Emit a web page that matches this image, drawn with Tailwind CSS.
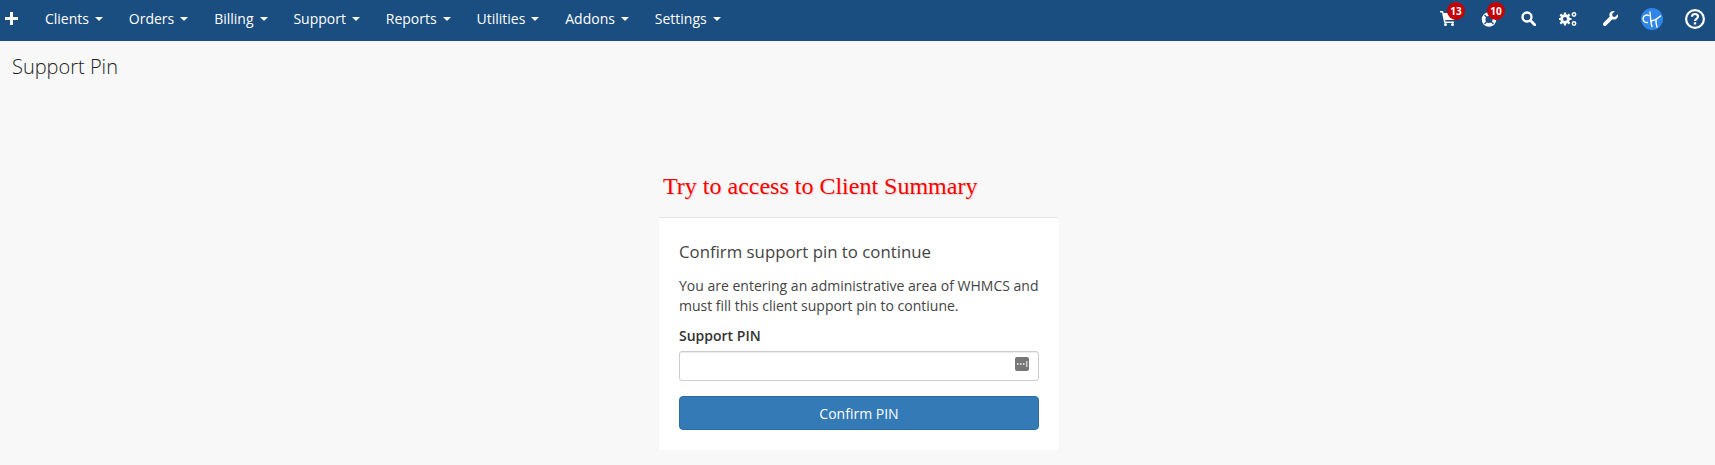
<!DOCTYPE html>
<html lang="en">
<head>
  <meta charset="UTF-8">
  <title>Support Pin</title>
  <script src="https://cdn.jsdelivr.net/npm/@tailwindcss/browser@4"></script>
</head>
<body class="bg-[#f8f8f8] min-h-screen font-['Open_Sans',sans-serif] text-[#333]">
  <nav class="h-[41px] bg-[#1a4d80] flex items-start text-white text-[14px]">
    <a href="#" class="w-[32px] h-[37px] pl-[5px] flex items-center shrink-0">
      <svg width="13" height="13" viewBox="0 0 13 13" fill="#fff"><path d="M5 0h3v5h5v3H8v5H5V8H0V5h5z"/></svg>
    </a>
    <ul class="flex h-[37px] items-center">
      <li class="px-[12.95px] flex items-center">Clients<span class="ml-[6px] border-x-[4px] border-t-[4px] border-x-transparent border-t-white"></span></li>
      <li class="px-[12.95px] flex items-center">Orders<span class="ml-[6px] border-x-[4px] border-t-[4px] border-x-transparent border-t-white"></span></li>
      <li class="px-[12.95px] flex items-center">Billing<span class="ml-[6px] border-x-[4px] border-t-[4px] border-x-transparent border-t-white"></span></li>
      <li class="px-[12.95px] flex items-center">Support<span class="ml-[6px] border-x-[4px] border-t-[4px] border-x-transparent border-t-white"></span></li>
      <li class="px-[12.95px] flex items-center">Reports<span class="ml-[6px] border-x-[4px] border-t-[4px] border-x-transparent border-t-white"></span></li>
      <li class="px-[12.95px] flex items-center">Utilities<span class="ml-[6px] border-x-[4px] border-t-[4px] border-x-transparent border-t-white"></span></li>
      <li class="px-[12.95px] flex items-center">Addons<span class="ml-[6px] border-x-[4px] border-t-[4px] border-x-transparent border-t-white"></span></li>
      <li class="px-[12.95px] flex items-center">Settings<span class="ml-[6px] border-x-[4px] border-t-[4px] border-x-transparent border-t-white"></span></li>
    </ul>
    <div class="ml-auto flex h-[37px] items-center">
      <!-- cart -->
      <a href="#" class="relative w-[30px] flex justify-center">
        <svg width="16" height="15" viewBox="0 0 16 15" fill="#fff"><path d="M0 0h3l.6 2H16l-1.600 7H5.200l.3 1.500H14V12H4.200L2 1.600H0z"/><circle cx="5.500" cy="13.500" r="1.500"/><circle cx="12.500" cy="13.500" r="1.500"/></svg>
        <span class="absolute left-[14px] top-[-9px] w-[18px] h-[18px] rounded-full bg-[#c40000] text-[10px] font-bold leading-[18px] text-center">13</span>
      </a>
      <!-- life ring -->
      <a href="#" class="relative w-[50px] flex justify-center">
        <svg class="mt-[1px] ml-[1px]" width="16" height="15" viewBox="0 0 16 16" fill="none"><circle cx="8" cy="8" r="5.800" stroke="#fff" stroke-width="4"/><path d="M3.200 3.200l2.800 2.800M12.800 3.200L10 6M3.200 12.800L6 10M12.800 12.800L10 10" stroke="#1a4d80" stroke-width="1.400"/></svg>
        <span class="absolute left-[24px] top-[-9px] w-[18px] h-[18px] rounded-full bg-[#c40000] text-[10px] font-bold leading-[18px] text-center">10</span>
      </a>
      <!-- search -->
      <a href="#" class="w-[30px] flex justify-center">
        <svg width="15" height="15" viewBox="0 0 15 15" fill="none" stroke="#fff"><circle cx="6" cy="6" r="4.500" stroke-width="2.400"/><path d="M9.500 9.500l4.200 4.200" stroke-width="2.800" stroke-linecap="round"/></svg>
      </a>
      <!-- cogs -->
      <a href="#" class="w-[50px] flex justify-center">
        <svg width="18" height="14" viewBox="0 0 18 14" fill="none" stroke="#fff"><path d="M6 .5v13M-.5 7h13M1.400 2.400l9.200 9.200M10.600 2.400l-9.200 9.200" stroke-width="2.200"/><circle cx="6" cy="7" r="3.400" fill="#1a4d80" stroke-width="2.800"/><circle cx="15" cy="2.500" r="1.700" stroke-width="1.500"/><circle cx="15" cy="11.500" r="1.700" stroke-width="1.500"/></svg>
      </a>
      <!-- wrench -->
      <a href="#" class="w-[34px] flex justify-center">
        <svg width="15" height="15" viewBox="0 0 15 15" fill="#fff"><path d="M14.700 3.200l-2.800 2.700-2.300-.5-.5-2.300L11.800.3C9.900-.4 7.700.3 6.800 2c-.6 1.200-.5 2.500 0 3.600L.6 11.800a1.800 1.800 0 0 0 2.600 2.600l6.200-6.200c1.100.5 2.400.6 3.600 0 1.700-.9 2.400-3.100 1.700-5z"/></svg>
      </a>
      <!-- account avatar -->
      <a href="#" class="w-[48px] flex justify-center">
        <svg class="ml-[1px]" width="22" height="22" viewBox="0 0 22 22" fill="none"><circle cx="11" cy="11" r="11" fill="#2f86e8"/><path d="M7.800 7.500A3.800 3.800 0 1 0 6.500 14.500M9 4c.5 5 .5 10 2 14.500M10.500 13c3.500-.8 6.500-2.500 9-5M15 11c-.3 3 .2 5.500 1 8" stroke="#fff" stroke-width="1.400" stroke-linecap="round"/></svg>
      </a>
      <!-- help -->
      <a href="#" class="w-[40px] flex justify-center">
        <svg width="20" height="20" viewBox="0 0 20 20" fill="none" stroke="#fff"><circle cx="10" cy="10" r="8.900" stroke-width="2.200"/><path d="M7 7.800C7 6 8.300 5 10 5s3 1.100 3 2.600c0 2.200-3 2.200-3 4.400" stroke-width="2.200"/><path d="M10 13.300v2.200" stroke-width="2.400"/></svg>
      </a>
    </div>
  </nav>

  <h1 class="px-3 pt-[12px] text-[20px] leading-[27px] font-light text-[#222]">Support Pin</h1>

  <main class="w-[403px] pl-[3px] mx-auto mt-[89px]">
    <h2 class="pl-[4px] h-[48px] font-['Liberation_Serif',serif] text-[24px] leading-[34px] text-[#ff0000] [text-shadow:1px_1px_1px_rgba(0,0,0,0.15)]">Try to access to Client Summary</h2>
    <div class="bg-white border-t border-[#e8e8e8] px-5 pt-[22px] pb-5">
      <h3 class="text-[16.8px] leading-[24px] text-[#444]">Confirm support pin to continue</h3>
      <p class="mt-[12px] text-[14px] leading-[20px] text-[#444]">You are entering an administrative area of WHMCS and must fill this client support pin to contiune.</p>
      <label class="block mt-[10px] text-[14px] leading-[20px] font-semibold text-[#333]">Support PIN</label>
      <div class="relative mt-[5px]">
        <input type="password" class="block w-full h-[30px] bg-white border border-[#ccc] rounded-[3px] shadow-[inset_0_1px_1px_rgba(0,0,0,0.075)]">
        <svg class="absolute right-[10px] top-[6px]" width="14" height="14" viewBox="0 0 14 14"><rect width="14" height="14" rx="2" fill="#777"/><path d="M2 7h1.500M5 7h1.500M8 7h1.500" stroke="#fff" stroke-width="1.600"/><path d="M11.800 4v6" stroke="#fff"/></svg>
      </div>
      <button type="button" class="mt-[15px] block w-full h-[34px] bg-[#337ab7] border border-[#2e6da4] rounded-[4px] text-white text-[14px]">Confirm PIN</button>
    </div>
  </main>
</body>
</html>
